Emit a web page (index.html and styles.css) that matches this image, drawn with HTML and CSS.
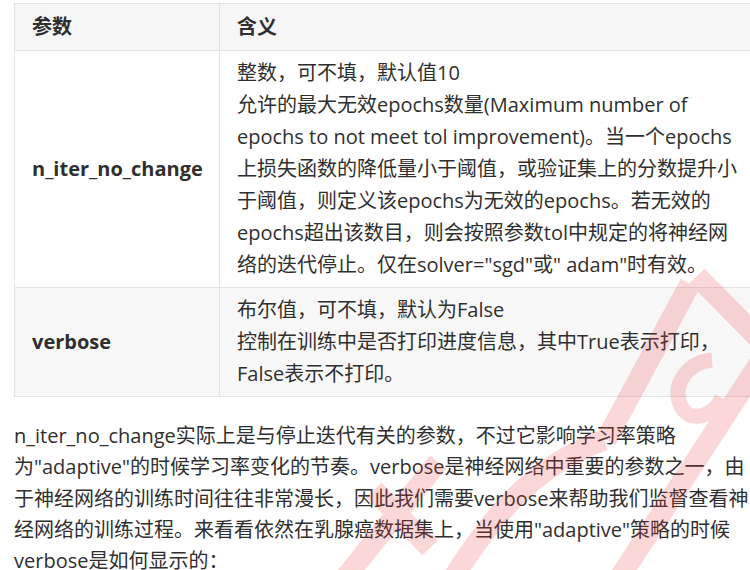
FILE: index.html
```html
<!DOCTYPE html>
<html lang="zh-CN">
<head>
  <meta charset="UTF-8">
  <title>MLPClassifier 参数</title>
  <link rel="stylesheet" href="styles.css">
</head>
<body>
  <div class="article">
    <table class="param-table">
      <thead>
        <tr>
          <th class="col-name">参数</th>
          <th>含义</th>
        </tr>
      </thead>
      <tbody>
        <tr>
          <td class="col-name">n_iter_no_change</td>
          <td>整数，可不填，默认值10<br>允许的最大无效epochs数量(Maximum number of epochs to not meet tol improvement)。当一个epochs上损失函数的降低量小于阈值，或验证集上的分数提升小于阈值，则定义该epochs为无效的epochs。若无效的epochs超出该数目，则会按照参数tol中规定的将神经网络的迭代停止。仅在solver="sgd"或" adam"时有效。</td>
        </tr>
        <tr>
          <td class="col-name">verbose</td>
          <td>布尔值，可不填，默认为False<br>控制在训练中是否打印进度信息，其中True表示打印，False表示不打印。</td>
        </tr>
      </tbody>
    </table>

    <p class="text">n_iter_no_change实际上是与停止迭代有关的参数，不过它影响学习率策略为"adaptive"的时候学习率变化的节奏。verbose是神经网络中重要的参数之一，由于神经网络的训练时间往往非常漫长，因此我们需要verbose来帮助我们监督查看神经网络的训练过程。来看看依然在乳腺癌数据集上，当使用"adaptive"策略的时候verbose是如何显示的：</p>

    <!-- watermark -->
    <svg class="watermark" width="750" height="570" viewBox="0 0 750 570">
      <g fill="none" stroke="#ec3b3b" stroke-width="21">
        <path d="M345 578 L438 462"/>
        <path d="M374 490 L430 548"/>
        <path d="M452 580 C496 508 542 462 604 440"/>
        <path d="M690 284 L606 440"/>
        <path d="M697 276 L762 342"/>
        <path d="M768 350 L618 580"/>
        <path d="M712 360 C690 362 672 382 680 404 C688 424 712 418 722 398" stroke-width="15"/>
      </g>
    </svg>
  </div>
</body>
</html>
```

FILE: styles.css
```css
body {
  margin: 0;
  background: #fff;
  color: #2f2f2f;
  font-family: "Open Sans", "Noto Sans CJK SC", sans-serif;
  font-size: 20px;
  overflow: hidden;
}

.article {
  position: relative;
  width: 736px;
  padding: 3px 0 0 14px;
}

.param-table {
  width: 740px;
  border-collapse: collapse;
  table-layout: fixed;
  line-height: 32px;
}

.param-table th,
.param-table td {
  border: 1px solid #e3e3e3;
  text-align: left;
  vertical-align: middle;
  padding: 6px 8px 6px 17px;
}

.param-table th {
  background: #f6f6f6;
  font-weight: 700;
  padding-top: 7px;
  padding-bottom: 7px;
}

.param-table .col-name {
  width: 205px;
  box-sizing: border-box;
}

.param-table td.col-name {
  font-weight: 700;
}

.param-table tbody tr:nth-child(2) {
  background: #f8f8f8;
}

.text {
  width: 736px;
  margin: 23px 0 0 0;
  line-height: 31.3px;
}

.watermark {
  position: absolute;
  left: 0;
  top: 0;
  opacity: 0.2;
  pointer-events: none;
}
```
